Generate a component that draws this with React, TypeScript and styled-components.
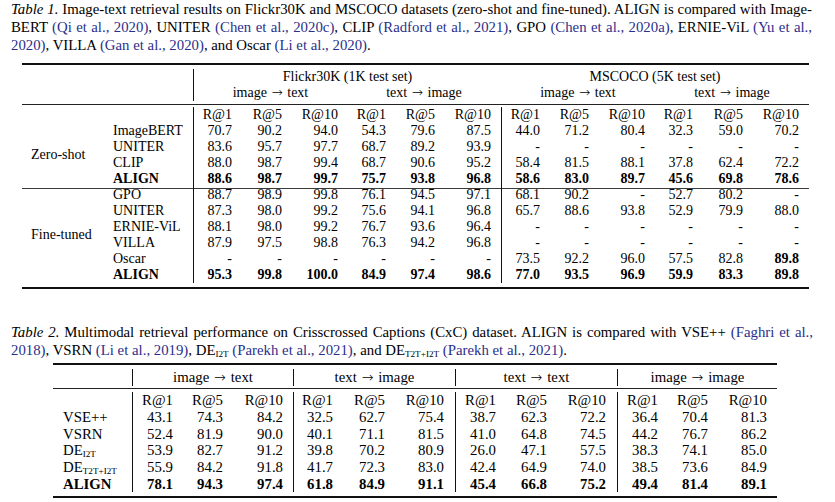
import React from "react";
import styled, { createGlobalStyle } from "styled-components";

const Global = createGlobalStyle`
  html, body { margin: 0; padding: 0; background: #fff; }
  body { font-family: "Liberation Serif", "Times New Roman", serif; color: #000; }
`;

const Page = styled.div`
  width: 835px;
  height: 502px;
  overflow: hidden;
  display: flex;
  flex-direction: column;
  background: #fff;
`;

const Caption = styled.div<{ $top: number; $width: number }>`
  margin: ${(p) => p.$top}px 0 0 11px;
  width: ${(p) => p.$width}px;
  font-size: 14.8px;
  line-height: 18px;
`;

const CapLine = styled.div<{ $justify?: boolean }>`
  height: 18px;
  white-space: ${(p) => (p.$justify ? "normal" : "nowrap")};
  text-align: ${(p) => (p.$justify ? "justify" : "left")};
  text-align-last: ${(p) => (p.$justify ? "justify" : "left")};
  overflow: hidden;
`;

const Label = styled.i`
  font-style: italic;
`;

const Cite = styled.span`
  color: #2b2f8c;
`;

const Sub = styled.span`
  font-size: 0.62em;
  vertical-align: -0.25em;
  line-height: 0;
`;

const Arrow = styled.span`
  display: inline-block;
  width: 1em;
  text-align: center;
  font-family: "DejaVu Sans", sans-serif;
  font-size: 0.95em;
  font-weight: 300;
`;

const Table = styled.div<{ $top: number; $left: number; $width: number; $font: number; $padTop: number }>`
  margin: ${(p) => p.$top}px 0 0 ${(p) => p.$left}px;
  width: ${(p) => p.$width}px;
  font-size: ${(p) => p.$font}px;
  border-top: 2px solid #111;
  border-bottom: 2px solid #111;
  padding: ${(p) => p.$padTop}px 0 4px;
  box-sizing: content-box;
`;

const Grid = styled.div<{ $cols: string; $row: number; $rule?: boolean }>`
  display: grid;
  grid-template-columns: ${(p) => p.$cols};
  grid-auto-rows: ${(p) => p.$row}px;
  line-height: ${(p) => p.$row}px;
  background: ${(p) =>
    p.$rule ? "linear-gradient(#3a3a3a, #3a3a3a) 0 1px / 100% 1px no-repeat" : "none"};
`;

const HeadRule = styled.div<{ $above: number; $below: number }>`
  height: 1px;
  background: #222;
  margin: ${(p) => p.$above}px 0 ${(p) => p.$below}px;
`;

const Cell = styled.div<{
  $align?: "left" | "right" | "center";
  $bold?: boolean;
  $line?: boolean;
  $pl?: number;
  $pr?: number;
  $span?: number;
}>`
  box-sizing: border-box;
  white-space: nowrap;
  text-align: ${(p) => p.$align || "right"};
  font-weight: ${(p) => (p.$bold ? 700 : 400)};
  border-left: ${(p) => (p.$line ? "1px solid #111" : "none")};
  padding-left: ${(p) => p.$pl || 0}px;
  padding-right: ${(p) => p.$pr || 0}px;
  grid-row: ${(p) => (p.$span ? `span ${p.$span}` : "auto")};
  align-self: ${(p) => (p.$span ? "center" : "stretch")};
`;

/* ---------- Table 1 ---------- */

const T1_COLS = "86px 85px 39px 50px 56px 48px 49px 66px 39px 49px 56px 48px 50px 66px";
const T1_LINES = [0, 6];
const T1_PR = [0, 0, 0, 0, 0, 10, 0, 0, 0, 0, 0, 10];

type Row1 = { name: string; bold?: boolean; vals: string[]; boldIdx?: number[] };

const zeroShot: Row1[] = [
  { name: "ImageBERT", vals: "70.7 90.2 94.0 54.3 79.6 87.5 44.0 71.2 80.4 32.3 59.0 70.2".split(" ") },
  { name: "UNITER", vals: "83.6 95.7 97.7 68.7 89.2 93.9 - - - - - -".split(" ") },
  { name: "CLIP", vals: "88.0 98.7 99.4 68.7 90.6 95.2 58.4 81.5 88.1 37.8 62.4 72.2".split(" ") },
  { name: "ALIGN", bold: true, vals: "88.6 98.7 99.7 75.7 93.8 96.8 58.6 83.0 89.7 45.6 69.8 78.6".split(" ") },
];

const fineTuned: Row1[] = [
  { name: "GPO", vals: "88.7 98.9 99.8 76.1 94.5 97.1 68.1 90.2 - 52.7 80.2 -".split(" ") },
  { name: "UNITER", vals: "87.3 98.0 99.2 75.6 94.1 96.8 65.7 88.6 93.8 52.9 79.9 88.0".split(" ") },
  { name: "ERNIE-ViL", vals: "88.1 98.0 99.2 76.7 93.6 96.4 - - - - - -".split(" ") },
  { name: "VILLA", vals: "87.9 97.5 98.8 76.3 94.2 96.8 - - - - - -".split(" ") },
  { name: "Oscar", vals: "- - - - - - 73.5 92.2 96.0 57.5 82.8 89.8".split(" "), boldIdx: [11] },
  { name: "ALIGN", bold: true, vals: "95.3 99.8 100.0 84.9 97.4 98.6 77.0 93.5 96.9 59.9 83.3 89.8".split(" ") },
];

const RECALL3 = ["R@1", "R@5", "R@10"];

function T1Values({ vals, bold, boldIdx }: { vals: string[]; bold?: boolean; boldIdx?: number[] }) {
  return (
    <>
      {vals.map((v, i) => (
        <Cell
          key={i}
          $line={T1_LINES.includes(i)}
          $pr={T1_PR[i]}
          $bold={bold || (boldIdx ? boldIdx.includes(i) : false)}
        >
          {v}
        </Cell>
      ))}
    </>
  );
}

function T1Group({ label, rows, withHeader, rule }: { label: string; rows: Row1[]; withHeader?: boolean; rule?: boolean }) {
  return (
    <Grid $cols={T1_COLS} $row={16} $rule={rule}>
      {withHeader && (
        <>
          <Cell />
          <Cell />
          <T1Values vals={[...RECALL3, ...RECALL3, ...RECALL3, ...RECALL3]} />
        </>
      )}
      <Cell $align="left" $pl={9} $span={rows.length}>
        {label}
      </Cell>
      {rows.map((r, i) => (
        <React.Fragment key={i}>
          <Cell $align="left" $pl={5} $bold={r.bold}>
            {r.name}
          </Cell>
          <T1Values vals={r.vals} bold={r.bold} boldIdx={r.boldIdx} />
        </React.Fragment>
      ))}
    </Grid>
  );
}

const Dir = ({ from, to }: { from: string; to: string }) => (
  <>
    {from} <Arrow>→</Arrow> {to}
  </>
);

/* ---------- Table 2 ---------- */

const T2_COLS = "79px 41px 50px 70px 40px 52px 70px 41px 51px 70px 41px 50px 69px";
const T2_LINES = [0, 3, 6, 9];
const T2_PR = [0, 0, 10, 0, 0, 11, 0, 0, 11, 0, 0, 10];

type Row2 = { name: React.ReactNode; bold?: boolean; vals: string[] };

const t2rows: Row2[] = [
  { name: "VSE++", vals: "43.1 74.3 84.2 32.5 62.7 75.4 38.7 62.3 72.2 36.4 70.4 81.3".split(" ") },
  { name: "VSRN", vals: "52.4 81.9 90.0 40.1 71.1 81.5 41.0 64.8 74.5 44.2 76.7 86.2".split(" ") },
  {
    name: (
      <>
        DE<Sub>I2T</Sub>
      </>
    ),
    vals: "53.9 82.7 91.2 39.8 70.2 80.9 26.0 47.1 57.5 38.3 74.1 85.0".split(" "),
  },
  {
    name: (
      <>
        DE<Sub>T2T+I2T</Sub>
      </>
    ),
    vals: "55.9 84.2 91.8 41.7 72.3 83.0 42.4 64.9 74.0 38.5 73.6 84.9".split(" "),
  },
  { name: "ALIGN", bold: true, vals: "78.1 94.3 97.4 61.8 84.9 91.1 45.4 66.8 75.2 49.4 81.4 89.1".split(" ") },
];

function T2Values({ vals, bold }: { vals: string[]; bold?: boolean }) {
  return (
    <>
      {vals.map((v, i) => (
        <Cell key={i} $line={T2_LINES.includes(i)} $pr={T2_PR[i]} $bold={bold}>
          {v}
        </Cell>
      ))}
    </>
  );
}

export default function App() {
  return (
    <Page>
      <Global />
      <Caption $top={0} $width={801}>
        <CapLine $justify>
          <Label>Table 1.</Label> Image-text retrieval results on Flickr30K and MSCOCO datasets (zero-shot and
          fine-tuned). ALIGN is compared with Image-
        </CapLine>
        <CapLine $justify>
          BERT <Cite>(Qi et al., 2020)</Cite>, UNITER <Cite>(Chen et al., 2020c)</Cite>, CLIP{" "}
          <Cite>(Radford et al., 2021)</Cite>, GPO <Cite>(Chen et al., 2020a)</Cite>, ERNIE-ViL{" "}
          <Cite>(Yu et al.,</Cite>
        </CapLine>
        <CapLine>
          <Cite>2020)</Cite>, VILLA <Cite>(Gan et al., 2020)</Cite>, and Oscar <Cite>(Li et al., 2020)</Cite>.
        </CapLine>
      </Caption>

      <Table $top={9} $left={22} $width={787} $font={14} $padTop={4}>
        <Grid $cols="171px 308px 308px" $row={16}>
          <Cell />
          <Cell $align="center" $line>
            Flickr30K (1K test set)
          </Cell>
          <Cell $align="center">MSCOCO (5K test set)</Cell>
        </Grid>
        <Grid $cols="171px 154px 154px 154px 154px" $row={16}>
          <Cell />
          <Cell $align="center" $line>
            <Dir from="image" to="text" />
          </Cell>
          <Cell $align="center">
            <Dir from="text" to="image" />
          </Cell>
          <Cell $align="center">
            <Dir from="image" to="text" />
          </Cell>
          <Cell $align="center">
            <Dir from="text" to="image" />
          </Cell>
        </Grid>
        <HeadRule $above={3} $below={2} />
        <T1Group label="Zero-shot" rows={zeroShot} withHeader />
        <T1Group label="Fine-tuned" rows={fineTuned} rule />
      </Table>

      <Caption $top={34} $width={802}>
        <CapLine $justify>
          <Label>Table 2.</Label> Multimodal retrieval performance on Crisscrossed Captions (CxC) dataset. ALIGN is
          compared with VSE++ <Cite>(Faghri et al.,</Cite>
        </CapLine>
        <CapLine>
          <Cite>2018)</Cite>, VSRN <Cite>(Li et al., 2019)</Cite>, DE<Sub>I2T</Sub>{" "}
          <Cite>(Parekh et al., 2021)</Cite>, and DE<Sub>T2T+I2T</Sub> <Cite>(Parekh et al., 2021)</Cite>.
        </CapLine>
      </Caption>

      <Table $top={3.5} $left={53} $width={724} $font={14.8} $padTop={4.5}>
        <Grid $cols="79px 161px 162px 162px 160px" $row={16.7}>
          <Cell />
          <Cell $align="center" $line>
            <Dir from="image" to="text" />
          </Cell>
          <Cell $align="center" $line>
            <Dir from="text" to="image" />
          </Cell>
          <Cell $align="center" $line>
            <Dir from="text" to="text" />
          </Cell>
          <Cell $align="center" $line>
            <Dir from="image" to="image" />
          </Cell>
        </Grid>
        <HeadRule $above={2.8} $below={3} />
        <Grid $cols={T2_COLS} $row={16.67}>
          <Cell />
          <T2Values vals={[...RECALL3, ...RECALL3, ...RECALL3, ...RECALL3]} />
          {t2rows.map((r, i) => (
            <React.Fragment key={i}>
              <Cell $align="left" $pl={10} $bold={r.bold}>
                {r.name}
              </Cell>
              <T2Values vals={r.vals} bold={r.bold} />
            </React.Fragment>
          ))}
        </Grid>
      </Table>
    </Page>
  );
}
